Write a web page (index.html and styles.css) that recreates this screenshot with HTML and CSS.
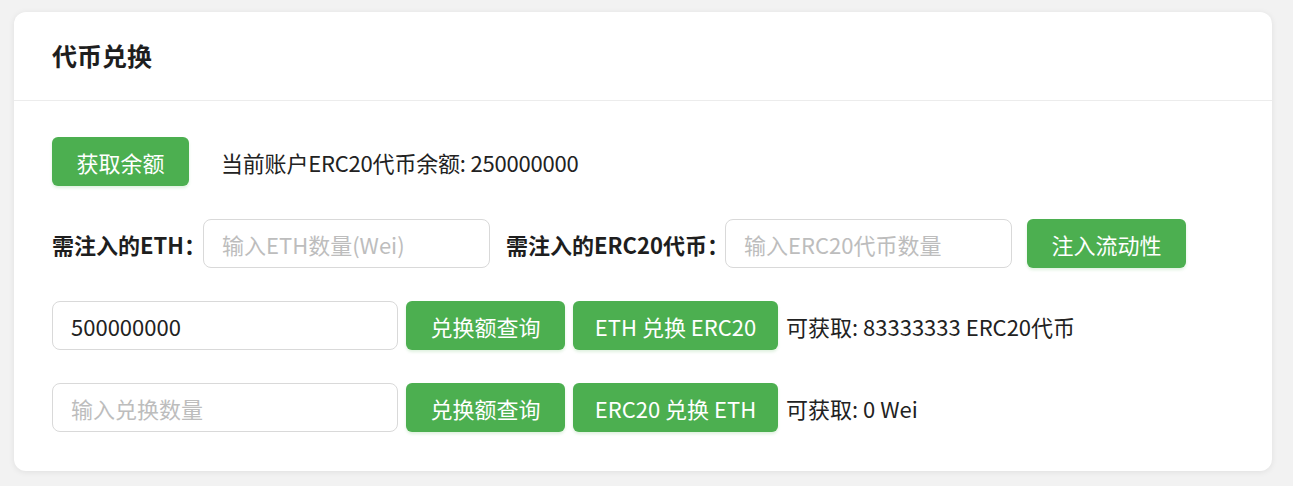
FILE: index.html
```html
<!DOCTYPE html>
<html lang="zh-CN">
<head>
<meta charset="utf-8">
<title>代币兑换</title>
<link rel="stylesheet" href="styles.css">
</head>
<body>
<div class="card">
  <div class="card-header">
    <h2 class="title">代币兑换</h2>
  </div>
  <div class="card-body">
    <div class="row">
      <button class="btn btn-balance">获取余额</button>
      <span class="info info-balance">当前账户ERC20代币余额: 250000000</span>
    </div>
    <div class="row row-inject">
      <label class="label label-eth">需注入的ETH：</label>
      <input class="input input-sm" type="text" placeholder="输入ETH数量(Wei)">
      <label class="label label-erc">需注入的ERC20代币：</label>
      <input class="input input-sm" type="text" placeholder="输入ERC20代币数量">
      <button class="btn btn-inject">注入流动性</button>
    </div>
    <div class="row">
      <input class="input input-lg" type="text" value="500000000">
      <button class="btn">兑换额查询</button>
      <button class="btn btn-swap">ETH 兑换 ERC20</button>
      <span class="info">可获取: 83333333 ERC20代币</span>
    </div>
    <div class="row">
      <input class="input input-lg" type="text" placeholder="输入兑换数量">
      <button class="btn">兑换额查询</button>
      <button class="btn btn-swap">ERC20 兑换 ETH</button>
      <span class="info">可获取: 0 Wei</span>
    </div>
  </div>
</div>
</body>
</html>
```
FILE: styles.css
```css
* { box-sizing: border-box; }

html, body {
  margin: 0;
  padding: 0;
  background: #f2f2f2;
}

body {
  padding: 12px 21px 15px 14px;
  font-family: "Noto Sans CJK SC", "Noto Sans", sans-serif;
  color: #222;
}

.card {
  background: #fff;
  border-radius: 12px;
  box-shadow: 0 1px 6px rgba(0, 0, 0, 0.08);
}

.card-header {
  height: 89px;
  display: flex;
  align-items: center;
  padding: 0 38px;
  border-bottom: 1px solid #ececec;
}

.title {
  margin: 0;
  font-size: 25px;
  font-weight: 700;
  color: #1e1e1e;
  position: relative;
  top: -1px;
}

.card-body {
  padding: 36px 38px 39px;
  display: flex;
  flex-direction: column;
  gap: 33px;
}

.row {
  display: flex;
  align-items: center;
  gap: 8px;
  height: 49px;
}

.row-inject { gap: 0; }

.btn {
  height: 49px;
  padding: 0 24.5px;
  border: none;
  border-radius: 6px;
  background: #4caf50;
  color: #fff;
  font-family: inherit;
  font-size: 22px;
  box-shadow: 0 2px 3px rgba(76, 175, 80, 0.18);
  cursor: pointer;
  white-space: nowrap;
}

.btn-swap { width: 205px; padding: 0; }

.btn-balance { margin-right: 24px; }

.btn-inject { margin-left: 15px; }

.info {
  font-size: 22px;
  color: #222;
  white-space: nowrap;
}

.info-balance { letter-spacing: -0.2px; }

.label {
  font-size: 22px;
  font-weight: 700;
  color: #1e1e1e;
  white-space: nowrap;
}

.label-eth { width: 151px; }

.label-erc { width: 219px; margin-left: 16px; }

.input {
  height: 49px;
  padding: 0 18px;
  border: 1px solid #d9d9d9;
  border-radius: 8px;
  font-family: inherit;
  font-size: 22px;
  color: #222;
  background: #fff;
  outline: none;
}

.input::placeholder { color: #bdbdbd; }

.input-sm { width: 287px; }

.input-lg { width: 346px; }
```
